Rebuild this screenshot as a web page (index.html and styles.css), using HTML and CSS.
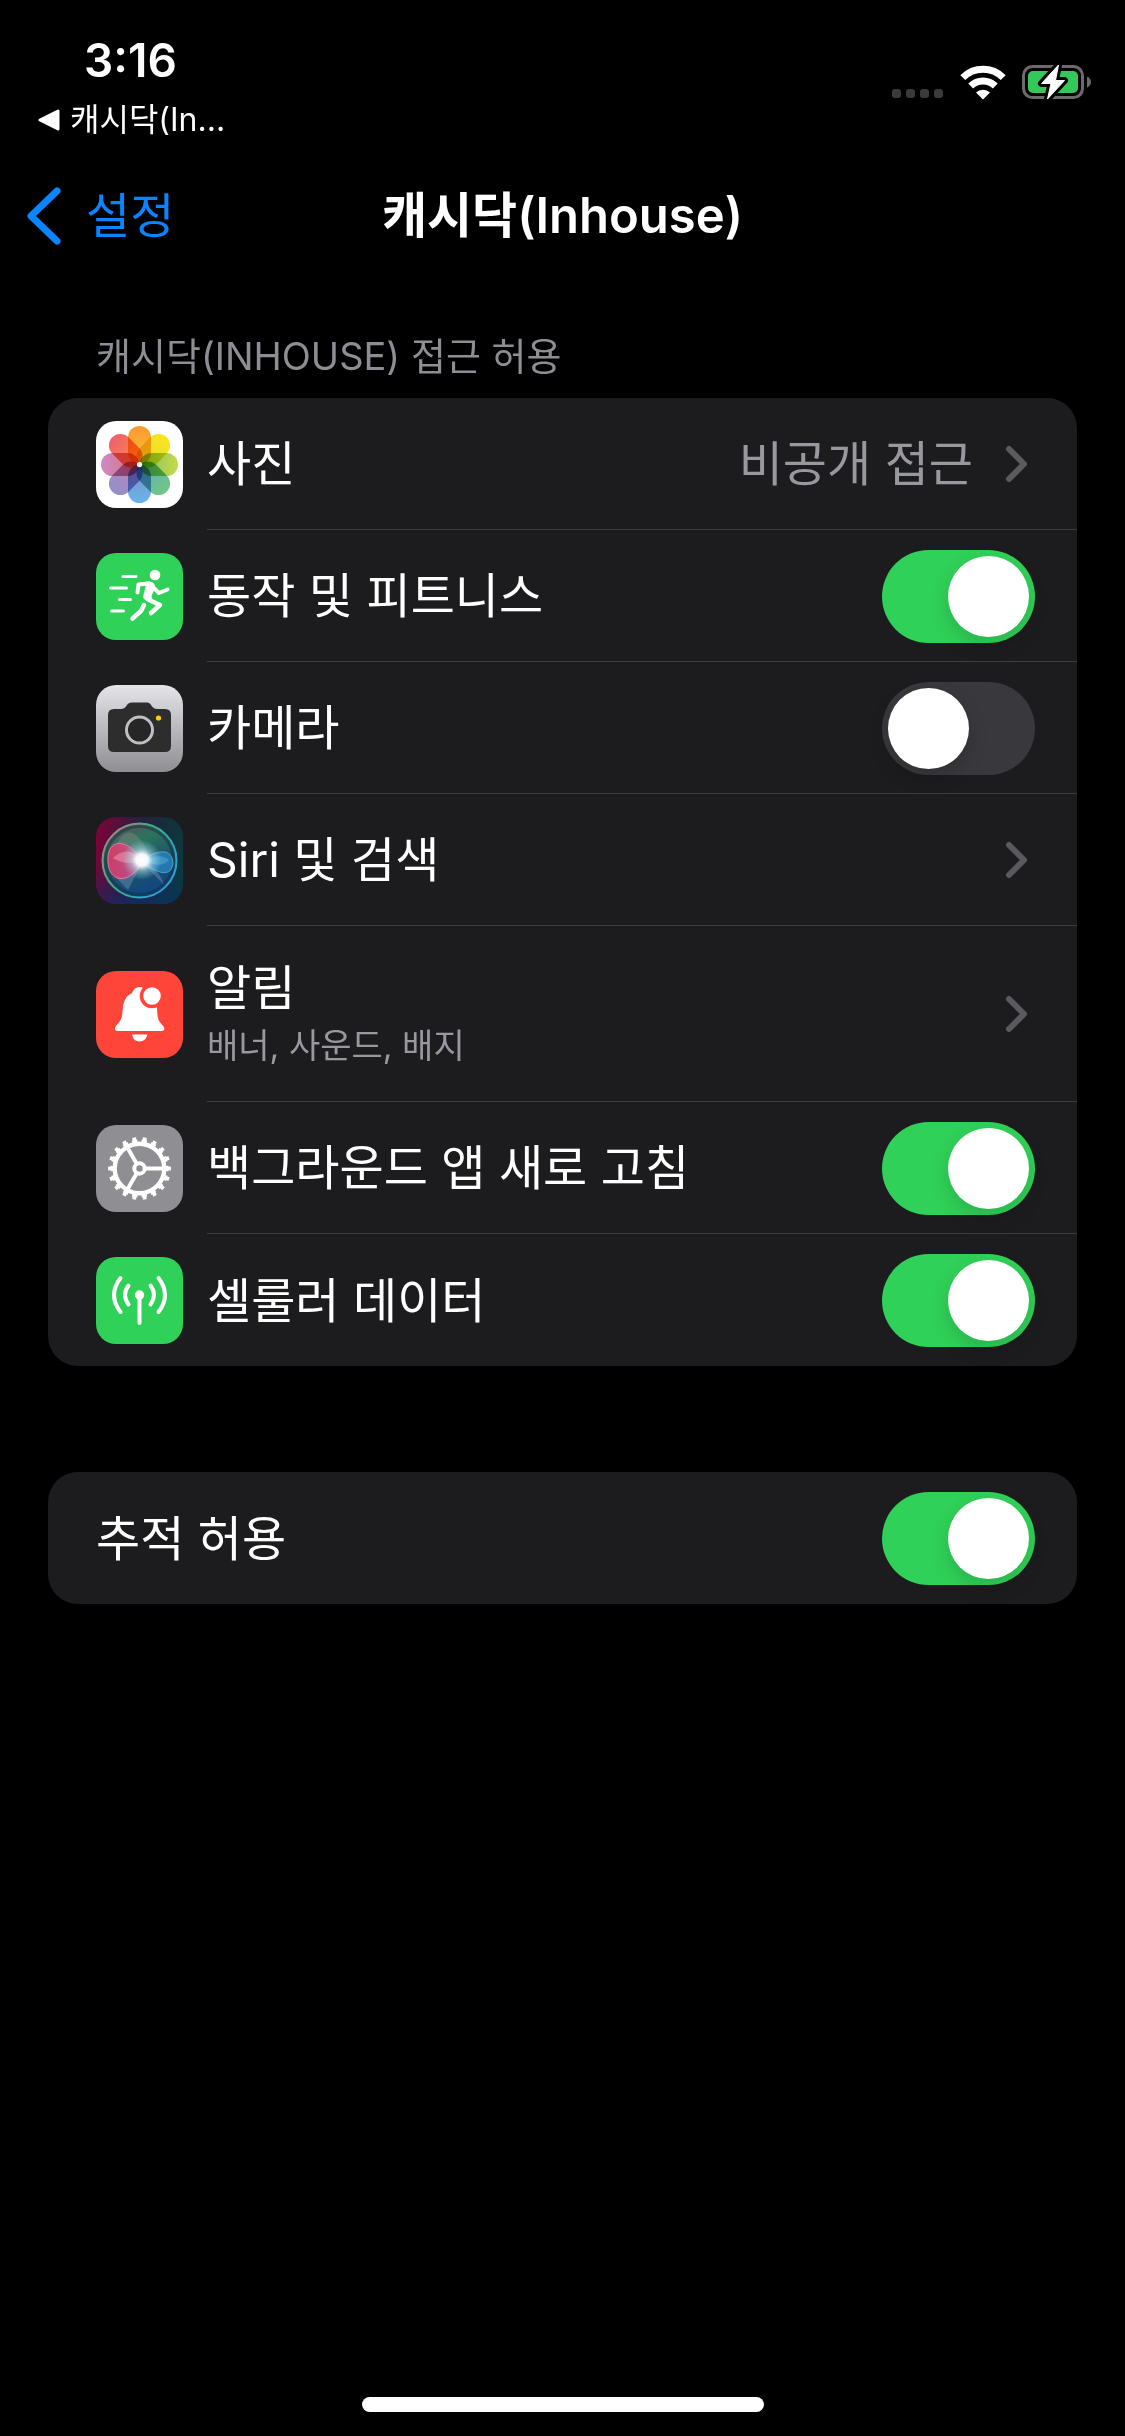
FILE: index.html
```html
<!DOCTYPE html>
<html lang="ko">
<head>
<meta charset="UTF-8">
<meta name="viewport" content="width=device-width, initial-scale=1.0">
<title>캐시닥(Inhouse)</title>
<link rel="stylesheet" href="styles.css">
</head>
<body>

<header class="status-bar">
    <div class="status-left">
        <span class="time">3:16</span>
        <a class="return-app" href="#">
            <svg width="22" height="22" viewBox="0 0 22 22" aria-hidden="true"><path d="M2 11L20 2V20Z" fill="#fff" stroke="#fff" stroke-width="3" stroke-linejoin="round"/></svg>
            <span>캐시닥(In...</span>
        </a>
    </div>
    <div class="status-right">
        <svg class="signal" width="52" height="10" viewBox="0 0 52 10" fill="#3a3a3a" aria-hidden="true">
            <rect width="9" height="9" rx="3"/>
            <rect x="14" width="9" height="9" rx="3"/>
            <rect x="28" width="9" height="9" rx="3"/>
            <rect x="42" width="9" height="9" rx="3"/>
        </svg>
        <svg width="46" height="36" viewBox="0 0 46 36" aria-hidden="true">
            <g fill="none" stroke="#fff" stroke-width="7">
                <path d="M2.800 13.600A28.500 28.500 0 0 1 43.200 13.600"/>
                <path d="M10.700 22A17.500 17.500 0 0 1 35.300 22"/>
            </g>
            <path d="M16 28.500A10 10 0 0 1 30 28.500L23 35.500Z" fill="#fff"/>
        </svg>
        <svg width="70" height="38" viewBox="0 0 70 38" aria-hidden="true">
            <rect x="1.500" y="3.500" width="59" height="31" rx="9" fill="none" stroke="#6b6b6b" stroke-width="3"/>
            <path d="M65 13.500Q69 15.500 69 19T65 24.500Z" fill="#6b6b6b"/>
            <rect x="6" y="8" width="50" height="22" rx="5" fill="#34c759"/>
            <path d="M36.500 2L19.500 20.500H29L25.500 36L42.500 17.500H33.500Z" fill="#fff" stroke="#000" stroke-width="7" stroke-linejoin="round"/>
            <path d="M36.500 2L19.500 20.500H29L25.500 36L42.500 17.500H33.500Z" fill="#fff" stroke="#fff" stroke-width="1" stroke-linejoin="round"/>
        </svg>
    </div>
</header>

<nav class="nav-bar">
    <a class="back" href="#">
        <svg width="36" height="60" viewBox="0 0 36 60" fill="none" aria-hidden="true"><path d="M31 5L5 30L31 55" stroke="#0a84ff" stroke-width="7" stroke-linecap="round" stroke-linejoin="round"/></svg>
        <span>설정</span>
    </a>
    <h1>캐시닥(Inhouse)</h1>
</nav>

<main>
    <h2>캐시닥(INHOUSE) 접근 허용</h2>

    <div class="card">
        <a class="row" href="#">
            <svg class="icon photos" viewBox="0 0 87 87" aria-hidden="true">
                <defs>
                    <linearGradient id="p1" x2="0" y2="1"><stop stop-color="#f79a35"/><stop offset="1" stop-color="#fdc22c"/></linearGradient>
                    <linearGradient id="p2" x2="0" y2="1"><stop stop-color="#fbe51e"/><stop offset="1" stop-color="#dbdc35"/></linearGradient>
                    <linearGradient id="p3" x2="0" y2="1"><stop stop-color="#c5db49"/><stop offset="1" stop-color="#82bd68"/></linearGradient>
                    <linearGradient id="p4" x2="0" y2="1"><stop stop-color="#72c681"/><stop offset="1" stop-color="#62afc4"/></linearGradient>
                    <linearGradient id="p5" x2="0" y2="1"><stop stop-color="#69b5e6"/><stop offset="1" stop-color="#7c8ed0"/></linearGradient>
                    <linearGradient id="p6" x2="0" y2="1"><stop stop-color="#948fc9"/><stop offset="1" stop-color="#bc86b8"/></linearGradient>
                    <linearGradient id="p7" x2="0" y2="1"><stop stop-color="#cb8bc5"/><stop offset="1" stop-color="#e06c78"/></linearGradient>
                    <linearGradient id="p8" x2="0" y2="1"><stop stop-color="#f0606f"/><stop offset="1" stop-color="#f98c42"/></linearGradient>
                </defs>
                <rect width="87" height="87" rx="20" fill="#fff"/>
                <g class="petals">
                    <rect x="32" y="5" width="23" height="38" rx="11.500" fill="url(#p1)"/>
                    <rect x="32" y="5" width="23" height="38" rx="11.500" fill="url(#p2)" transform="rotate(45 43.500 43.500)"/>
                    <rect x="32" y="5" width="23" height="38" rx="11.500" fill="url(#p3)" transform="rotate(90 43.500 43.500)"/>
                    <rect x="32" y="5" width="23" height="38" rx="11.500" fill="url(#p4)" transform="rotate(135 43.500 43.500)"/>
                    <rect x="32" y="5" width="23" height="38" rx="11.500" fill="url(#p5)" transform="rotate(180 43.500 43.500)"/>
                    <rect x="32" y="5" width="23" height="38" rx="11.500" fill="url(#p6)" transform="rotate(225 43.500 43.500)"/>
                    <rect x="32" y="5" width="23" height="38" rx="11.500" fill="url(#p7)" transform="rotate(270 43.500 43.500)"/>
                    <rect x="32" y="5" width="23" height="38" rx="11.500" fill="url(#p8)" transform="rotate(315 43.500 43.500)"/>
                </g>
                <circle cx="43.500" cy="43.500" r="2.600" fill="#fff"/>
            </svg>
            <span class="row-body">
                <span class="label">사진</span>
                <span class="value">비공개 접근</span>
                <svg class="chevron" viewBox="0 0 30 42" aria-hidden="true"><path d="M4 6L19 21L4 36"/></svg>
            </span>
        </a>

        <label class="row">
            <svg class="icon" viewBox="0 0 87 87" aria-hidden="true">
                <rect width="87" height="87" rx="20" fill="#30d158"/>
                <circle cx="59" cy="22" r="5.300" fill="#fff"/>
                <g fill="none" stroke="#fff" stroke-linecap="round" stroke-linejoin="round">
                    <path d="M27 23.500H40M14.500 35H30.500M23.500 46.500H34.500M15.500 58H27.500" stroke-width="3"/>
                    <path d="M41.500 39.500L42.500 31.500L53 30.500L63 40L71.500 36.500" stroke-width="4"/>
                    <path d="M51 46L64 52L55 60" stroke-width="4.500"/>
                    <path d="M48 52L45 58L36.500 65.500" stroke-width="4.500"/>
                </g>
                <path d="M47 29L54 28.500Q60 30 59 35L55.500 43L57 48L48 46Q46.500 44 48 40L50 32Z" fill="#fff"/>
                <path d="M44.500 45.500L52.500 50.500" stroke="#30d158" stroke-width="1.500"/>
            </svg>
            <span class="row-body">
                <span class="label">동작 및 피트니스</span>
                <input class="switch" type="checkbox" role="switch" checked>
            </span>
        </label>

        <label class="row">
            <svg class="icon" viewBox="0 0 87 87" aria-hidden="true">
                <defs><linearGradient id="silver" x2="0" y2="1"><stop stop-color="#e5e4e9"/><stop offset="1" stop-color="#8f8e93"/></linearGradient></defs>
                <rect width="87" height="87" rx="20" fill="url(#silver)"/>
                <path d="M18 24H25Q28 24 30 21.500Q32 17.500 36 17.500H51Q54 17.500 56 21.500Q58 24 61 24H69Q75 24 75 30V61Q75 67 69 67H18Q12 67 12 61V30Q12 24 18 24Z" fill="#2d2d2d"/>
                <circle cx="43.500" cy="45" r="13" fill="#262626" stroke="#c0bfc5" stroke-width="3"/>
                <circle cx="62.500" cy="33" r="2.600" fill="#ffcc00"/>
            </svg>
            <span class="row-body">
                <span class="label">카메라</span>
                <input class="switch" type="checkbox" role="switch">
            </span>
        </label>

        <a class="row" href="#">
            <svg class="icon" viewBox="0 0 87 87" aria-hidden="true">
                <defs>
                    <linearGradient id="siriBg" x1="0" y1="0.300" x2="1" y2="0.500"><stop stop-color="#7a0438"/><stop offset="0.450" stop-color="#24213e"/><stop offset="1" stop-color="#0a3a3d"/></linearGradient>
                    <linearGradient id="siriLow" x2="0" y2="1"><stop offset="0.600" stop-color="#0b2c6b" stop-opacity="0"/><stop offset="1" stop-color="#0b2c7b" stop-opacity="0.500"/></linearGradient>
                    <linearGradient id="siriOrb" x1="0.200" x2="0.600" y2="1"><stop stop-color="#63505c"/><stop offset="0.300" stop-color="#28745e"/><stop offset="0.600" stop-color="#205368"/><stop offset="1" stop-color="#0c4585"/></linearGradient>
                    <linearGradient id="siriRing" x2="1" y2="0.600"><stop stop-color="#c67686"/><stop offset="0.500" stop-color="#42ac86"/><stop offset="1" stop-color="#329ed5"/></linearGradient>
                    <linearGradient id="siriPink" x2="1"><stop stop-color="#ee3467"/><stop offset="1" stop-color="#c65c98"/></linearGradient>
                    <radialGradient id="siriGlow"><stop stop-color="#fff"/><stop offset="0.300" stop-color="#fff" stop-opacity="0.950"/><stop offset="0.550" stop-color="#bdeef0" stop-opacity="0.500"/><stop offset="1" stop-color="#8fdcec" stop-opacity="0"/></radialGradient>
                </defs>
                <rect width="87" height="87" rx="20" fill="url(#siriBg)"/>
                <rect width="87" height="87" rx="20" fill="url(#siriLow)"/>
                <circle cx="43.500" cy="43.500" r="37" fill="url(#siriOrb)" stroke="url(#siriRing)" stroke-width="2"/>
                <circle cx="43.500" cy="43.500" r="34" fill="none" stroke="#142d3b" stroke-width="3" opacity="0.500"/>
                <path d="M20 28Q30 8 42 20Q53 30 53 48Q38 32 20 28Z" fill="#b9a4a8" opacity="0.250"/>
                <path d="M14 54Q30 68 46 46L32 73M46 45L68 68Q63 52 48 44Z" fill="#8ba5cc" opacity="0.350"/>
                <path d="M46 44C34 22 11 19 12 44C13 70 38 65 46 44Z" fill="url(#siriPink)" opacity="0.850" stroke="#ff7b9f"/>
                <path d="M17 41Q31 27 48 43Q31 50 17 41Z" fill="#f3a0b5" opacity="0.500"/>
                <path d="M46 44C57 34 76 29 77 46C76 61 60 57 46 44Z" fill="#277fbd" opacity="0.850" stroke="#48bad9"/>
                <path d="M50 44Q63 35 73 43Q65 52 50 44Z" fill="#5fbde0" opacity="0.400"/>
                <circle cx="46" cy="43" r="20" fill="url(#siriGlow)"/>
            </svg>
            <span class="row-body">
                <span class="label">Siri 및 검색</span>
                <svg class="chevron" viewBox="0 0 30 42" aria-hidden="true"><path d="M4 6L19 21L4 36"/></svg>
            </span>
        </a>

        <a class="row row-tall" href="#">
            <svg class="icon" viewBox="0 0 87 87" aria-hidden="true">
                <rect width="87" height="87" rx="20" fill="#ff453a"/>
                <path d="M43.500 16Q48 16 50 20L61 35Q61 46 63 50L67 55Q69 57 68 59Q67.500 60 65.500 60H21.500Q19.500 60 19 58.500Q18.500 57 20 55L24 50Q26.500 46 26.500 40Q27 26 36 22Q38 16 43.500 16Z" fill="#fff"/>
                <path d="M36 63.500H51.500Q49.500 70.500 43.500 70.500T36 63.500Z" fill="#fff"/>
                <circle cx="56" cy="25" r="10.500" fill="#fff" stroke="#ff453a" stroke-width="3.500"/>
            </svg>
            <span class="row-body">
                <span class="label">알림<small>배너, 사운드, 배지</small></span>
                <svg class="chevron" viewBox="0 0 30 42" aria-hidden="true"><path d="M4 6L19 21L4 36"/></svg>
            </span>
        </a>

        <label class="row">
            <svg class="icon" viewBox="0 0 87 87" aria-hidden="true">
                <rect width="87" height="87" rx="20" fill="#8e8e93"/>
                <g fill="none" stroke="#fff">
                    <circle cx="43.500" cy="43.500" r="24.800" stroke-width="4.400"/>
                    <circle cx="43.500" cy="43.500" r="27.500" stroke-width="3" pathLength="180" stroke-dasharray="5.600 4.400" stroke-dashoffset="2.800"/>
                    <circle cx="43.500" cy="43.500" r="29.700" stroke-width="3.400" pathLength="180" stroke-dasharray="3.600 6.400" stroke-dashoffset="1.800"/>
                    <circle cx="43.500" cy="43.500" r="5.200" stroke-width="4"/>
                    <path d="M50 43.500H67M40.300 37.900L31.800 23.200M40.300 49.100L31.800 63.800" stroke-width="4"/>
                </g>
            </svg>
            <span class="row-body">
                <span class="label">백그라운드 앱 새로 고침</span>
                <input class="switch" type="checkbox" role="switch" checked>
            </span>
        </label>

        <label class="row">
            <svg class="icon" viewBox="0 0 87 87" aria-hidden="true">
                <rect width="87" height="87" rx="20" fill="#30d158"/>
                <circle cx="43.500" cy="38" r="4.700" fill="#fff"/>
                <g fill="none" stroke="#fff" stroke-width="4" stroke-linecap="round">
                    <path d="M43.500 38V66"/>
                    <path d="M32.500 28.500Q25.500 38 32.500 47.500M54.500 28.500Q61.500 38 54.500 47.500"/>
                    <path d="M24.500 21Q11.500 38 24.500 55M62.500 21Q75.500 38 62.500 55"/>
                </g>
            </svg>
            <span class="row-body">
                <span class="label">셀룰러 데이터</span>
                <input class="switch" type="checkbox" role="switch" checked>
            </span>
        </label>
    </div>

    <div class="card">
        <label class="row">
            <span class="row-body">
                <span class="label">추적 허용</span>
                <input class="switch" type="checkbox" role="switch" checked>
            </span>
        </label>
    </div>
</main>

<div class="home-indicator"></div>

</body>
</html>
```
FILE: styles.css
```css
* {
    box-sizing: border-box;
}
body {
    font-family: Inter, "Noto Sans CJK KR", sans-serif;
    font-size: 48px;
    background-color: #000;
    color: #fff;
    margin: 0;
    min-height: 100vh;
    display: flex;
    flex-direction: column;
}
a {
    color: inherit;
    text-decoration: none;
}
svg {
    flex: none;
}
.status-bar {
    display: flex;
    justify-content: space-between;
    height: 150px;
    padding: 36px 33px 0 38px;
}
.status-left {
    display: flex;
    flex-direction: column;
    gap: 18px;
}
.time {
    font-size: 46px;
    font-weight: 600;
    line-height: 48px;
    padding-left: 46px;
}
.return-app {
    display: flex;
    align-items: center;
    gap: 10px;
    font-size: 32px;
    line-height: 36px;
}
.status-right {
    display: flex;
    align-items: center;
    gap: 16px;
    height: 92px;
}
.signal {
    margin-top: 24px;
}
.nav-bar {
    display: grid;
    grid-template-columns: 1fr auto 1fr;
    align-items: center;
    height: 132px;
    padding: 0 26px;
}
.nav-bar h1 {
    font-size: 49px;
    font-weight: 600;
    line-height: 60px;
    margin: 0;
}
.back {
    display: flex;
    align-items: center;
    gap: 24px;
    line-height: 60px;
    color: #0a84ff;
}
main {
    flex: 1;
    padding: 50px 48px;
}
h2 {
    font-size: 38px;
    font-weight: 400;
    line-height: 48px;
    color: #8d8d93;
    margin: 0 48px 18px;
}
.card {
    background-color: #1c1c1e;
    border-radius: 30px;
    padding-left: 48px;
    overflow: hidden;
}
.card + .card {
    margin-top: 106px;
}
.row {
    display: flex;
    align-items: center;
    gap: 24px;
    height: 132px;
}
.row-tall {
    height: 176px;
}
.icon {
    width: 87px;
    height: 87px;
}
.petals {
    isolation: isolate;
}
.petals rect {
    mix-blend-mode: multiply;
}
.row-body {
    display: flex;
    flex: 1;
    align-items: center;
    gap: 32px;
    height: 100%;
    padding: 1px 42px 0 0;
    border-bottom: 1px solid #3d3d40;
}
.row:last-child .row-body {
    border-bottom: none;
}
.label,
.value {
    line-height: 60px;
}
.label {
    flex: 1;
}
.label small {
    display: block;
    margin-top: 4px;
    font-size: 34px;
    line-height: 48px;
    color: #98989f;
}
.value {
    color: #98989f;
}
.chevron {
    width: 30px;
    height: 42px;
    fill: none;
    stroke: #5a5a5e;
    stroke-width: 6px;
    stroke-linecap: round;
    stroke-linejoin: round;
}
.switch {
    appearance: none;
    width: 153px;
    height: 93px;
    margin: 0;
    padding: 6px;
    border-radius: 47px;
    background-color: #39393d;
    display: flex;
    cursor: pointer;
}
.switch::before {
    content: "";
    width: 81px;
    height: 81px;
    border-radius: 50%;
    background-color: #fff;
    box-shadow: 0 8px 20px rgba(0, 0, 0, 0.15);
}
.switch:checked {
    background-color: #30d158;
    justify-content: flex-end;
}
.home-indicator {
    width: 402px;
    height: 15px;
    margin: 0 auto 24px;
    border-radius: 8px;
    background-color: #fff;
}
```
